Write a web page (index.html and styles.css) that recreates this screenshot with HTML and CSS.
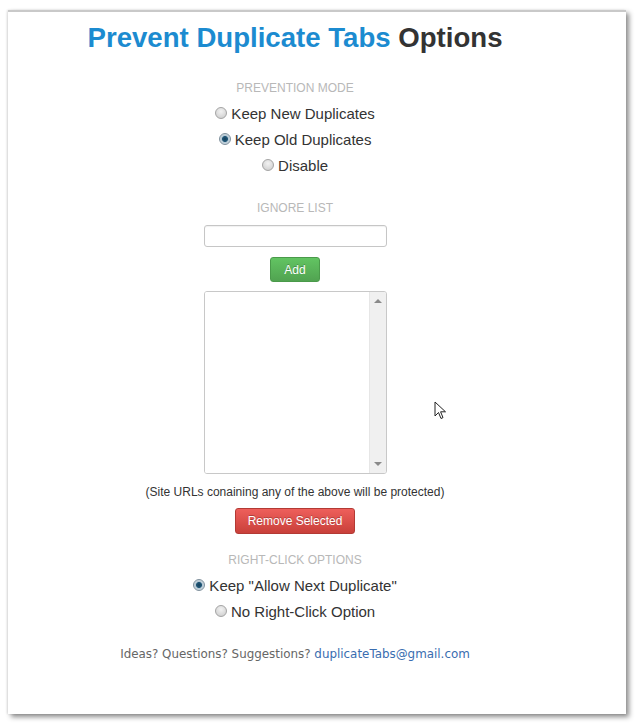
FILE: index.html
```html
<!DOCTYPE html>
<html>
<head>
<meta charset="utf-8">
<title>Prevent Duplicate Tabs Options</title>
<link rel="stylesheet" href="styles.css">
</head>
<body>
<div class="card">
  <div class="content">
    <h1 class="title"><span class="brand">Prevent Duplicate Tabs</span> Options</h1>

    <div class="heading h-mode">PREVENTION MODE</div>
    <div class="radios">
      <label class="radio"><input type="radio" name="mode"> Keep New Duplicates</label>
      <label class="radio"><input type="radio" name="mode" checked> Keep Old Duplicates</label>
      <label class="radio"><input type="radio" name="mode"> Disable</label>
    </div>

    <div class="heading h-ignore">IGNORE LIST</div>
    <input class="url-input" type="text">
    <button class="btn btn-add">Add</button>
    <div class="listbox">
      <div class="list-items"></div>
      <div class="scrollbar">
        <span class="arrow up"></span>
        <span class="arrow down"></span>
      </div>
    </div>
    <div class="note">(Site URLs conaining any of the above will be protected)</div>
    <button class="btn btn-remove">Remove Selected</button>

    <div class="heading h-right">RIGHT-CLICK OPTIONS</div>
    <div class="radios">
      <label class="radio"><input type="radio" name="rc" checked> Keep "Allow Next Duplicate"</label>
      <label class="radio"><input type="radio" name="rc"> No Right-Click Option</label>
    </div>

    <div class="footer">Ideas? Questions? Suggestions? <a href="#">duplicateTabs@gmail.com</a></div>
  </div>
</div>
<svg class="cursor" width="13" height="19" viewBox="0 0 13 19"><path d="M1 1 L1 15 L4.5 11.5 L7 17.5 L9 16.6 L6.6 10.8 L11.5 10.8 Z" fill="#fff" stroke="#222" stroke-width="1" stroke-linejoin="round"/></svg>
</body>
</html>
```

FILE: styles.css
```css
html, body {
  margin: 0;
  padding: 0;
  background: #ffffff;
}
body {
  position: relative;
  width: 640px;
  height: 728px;
  overflow: hidden;
  font-family: "Liberation Sans", Arial, sans-serif;
  color: #333;
}
.card {
  box-sizing: border-box;
  margin: 10px 0 0 8px;
  width: 618px;
  height: 704px;
  background: #fff;
  border-top: 2px solid #c9c9c9;
  box-shadow: 3px 3px 5px rgba(0,0,0,0.45), -1px 0 2px rgba(0,0,0,0.12);
  padding: 0 44px 0 0;
}
.content {
  display: flex;
  flex-direction: column;
  align-items: center;
}
.title {
  margin: 10px 0 0 0;
  font-size: 27.6px;
  line-height: 32px;
  font-weight: bold;
  color: #333;
  white-space: nowrap;
}
.brand {
  color: #1c8bd0;
}
.heading {
  font-size: 12px;
  line-height: 16px;
  color: #b8b8b8;
}
.h-mode { margin-top: 26px; }
.h-ignore { margin-top: 22px; }
.h-right { margin-top: 18px; }
.radios {
  margin-top: 4px;
  display: flex;
  flex-direction: column;
  align-items: center;
}
.radio {
  display: flex;
  align-items: center;
  height: 26px;
  font-size: 15px;
  color: #333;
  white-space: pre;
}
.radio input {
  appearance: none;
  -webkit-appearance: none;
  margin: 0 0 0 0;
  width: 12px;
  height: 12px;
  border-radius: 50%;
  border: 1px solid #a4a4a4;
  background: radial-gradient(circle at 50% 35%, #f2f2f2 0%, #d6d6d6 70%, #c4c4c4 100%);
  box-sizing: border-box;
  position: relative;
}
.radio input:checked {
  border-color: #7f909c;
  background: radial-gradient(circle at 50% 50%, #163f5a 0%, #22597a 38%, #b2c5d1 46%, #e6edf2 100%);
}
.url-input {
  margin-top: 9px;
  box-sizing: border-box;
  width: 183px;
  height: 22px;
  border: 1px solid #c6c6c6;
  border-radius: 3px;
  box-shadow: inset 0 1px 1px rgba(0,0,0,0.06);
  background: #fff;
  padding: 0;
}
.btn {
  box-sizing: border-box;
  font-family: "Liberation Sans", Arial, sans-serif;
  font-size: 12px;
  color: #fff;
  border-radius: 3px;
  padding: 0;
  cursor: default;
  text-shadow: 0 -1px 0 rgba(0,0,0,0.25);
}
.btn-add {
  margin-top: 10px;
  width: 50px;
  height: 25px;
  border: 1px solid #4a9a4a;
  background: linear-gradient(#62c462, #51a351);
}
.listbox {
  margin-top: 9px;
  box-sizing: border-box;
  width: 183px;
  height: 183px;
  border: 1px solid #c8c8c8;
  border-radius: 3px;
  display: flex;
  overflow: hidden;
}
.list-items {
  flex: 1;
  background: #fff;
}
.scrollbar {
  width: 16px;
  background: #f0f0f0;
  border-left: 1px solid #e6e6e6;
  display: flex;
  flex-direction: column;
  justify-content: space-between;
  align-items: center;
  padding: 7px 0 7px;
}
.arrow {
  width: 0;
  height: 0;
  border-left: 4px solid transparent;
  border-right: 4px solid transparent;
}
.arrow.up { border-bottom: 4px solid #8a8a8a; }
.arrow.down { border-top: 4px solid #8a8a8a; }
.note {
  margin-top: 10px;
  font-size: 12px;
  line-height: 16px;
  color: #333;
  white-space: nowrap;
}
.btn-remove {
  margin-top: 8px;
  width: 120px;
  height: 26px;
  border: 1px solid #b33a34;
  background: linear-gradient(#ee5f5b, #c9403a);
}
.footer {
  margin-top: 21px;
  font-family: "DejaVu Sans", sans-serif;
  font-size: 11.9px;
  line-height: 18px;
  color: #666;
  white-space: nowrap;
}
.footer a {
  color: #3a6db0;
  text-decoration: none;
}
.cursor {
  position: absolute;
  left: 434px;
  top: 401px;
}
```
